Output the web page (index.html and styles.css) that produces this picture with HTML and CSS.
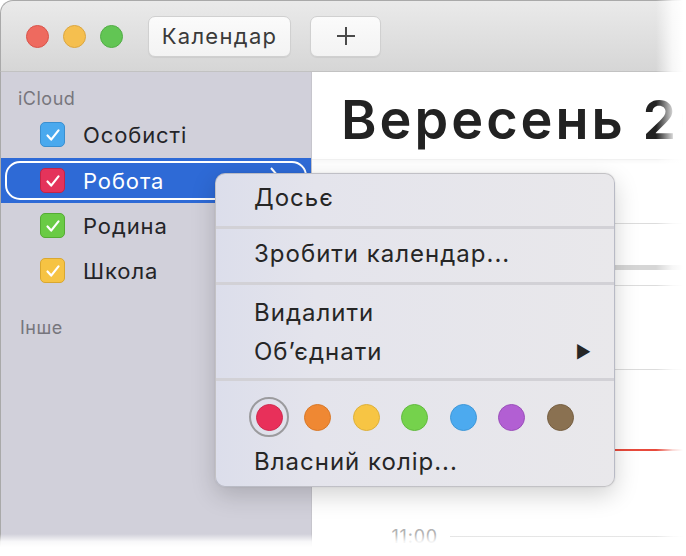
FILE: index.html
```html
<!DOCTYPE html>
<html lang="uk">
<head>
<meta charset="utf-8">
<title>Календар</title>
<link rel="stylesheet" href="styles.css">
</head>
<body>
<div class="window">
  <div class="toolbar">
    <div class="lights">
      <span class="light red"></span>
      <span class="light yellow"></span>
      <span class="light green"></span>
    </div>
    <button class="tbtn cal">Календар</button>
    <button class="tbtn plus"><svg width="22" height="22" viewBox="0 0 22 22"><path d="M11 2v18M2 11h18" stroke="#4a4a4a" stroke-width="2" fill="none"/></svg></button>
  </div>
  <div class="content">
    <aside class="sidebar">
      <div class="group">iCloud</div>
      <div class="item"><span class="cb cb-blue"><svg viewBox="0 0 24 24"><path d="M6 12.5l4 4.5 8-10" /></svg></span><span class="label">Особисті</span></div>
      <div class="item selected"><span class="cb cb-red"><svg viewBox="0 0 24 24"><path d="M6 12.5l4 4.5 8-10" /></svg></span><span class="label">Робота</span><svg class="chev" width="12" height="20" viewBox="0 0 12 20"><path d="M2 2l7 8-7 8" /></svg></div>
      <div class="item"><span class="cb cb-green"><svg viewBox="0 0 24 24"><path d="M6 12.5l4 4.5 8-10" /></svg></span><span class="label">Родина</span></div>
      <div class="item"><span class="cb cb-yellow"><svg viewBox="0 0 24 24"><path d="M6 12.5l4 4.5 8-10" /></svg></span><span class="label">Школа</span></div>
      <div class="group other">Інше</div>
    </aside>
    <main class="main">
      <div class="head"><h1>Вересень 2019 р.</h1></div>
      <div class="grid">
        <div class="gap g1"></div>
        <div class="line l1"></div>
        <div class="band"></div>
        <div class="line l2"></div>
        <div class="line l3"></div>
        <div class="now"></div>
        <div class="hour"><span class="time">11:00</span><span class="hline"></span></div>
      </div>
    </main>
  </div>

  <div class="menu">
    <div class="mi">Досьє</div>
    <div class="sep"></div>
    <div class="mi">Зробити календар...</div>
    <div class="sep"></div>
    <div class="mi mi-top">Видалити</div>
    <div class="mi mi-sub">Об’єднати<span class="arrow">▶</span></div>
    <div class="sep sep3"></div>
    <div class="colors">
      <span class="sw sel"><span class="dot c-red"></span></span>
      <span class="sw"><span class="dot c-orange"></span></span>
      <span class="sw"><span class="dot c-yellow"></span></span>
      <span class="sw"><span class="dot c-green"></span></span>
      <span class="sw"><span class="dot c-blue"></span></span>
      <span class="sw"><span class="dot c-purple"></span></span>
      <span class="sw"><span class="dot c-brown"></span></span>
    </div>
    <div class="mi mi-last">Власний колір...</div>
  </div>

  <div class="fade-right"></div>
  <div class="fade-bottom"></div>
</div>
</body>
</html>
```

FILE: styles.css
```css
* { box-sizing: border-box; }
html, body { margin: 0; padding: 0; background: #fff; }
body { font-family: Inter, "Noto Sans", "DejaVu Sans", sans-serif; color: #222; }

.window {
  position: relative;
  width: 686px;
  height: 556px;
  overflow: hidden;
  background: #fff;
}

.toolbar {
  height: 72px;
  display: flex;
  align-items: center;
  background: linear-gradient(#eaeaea, #d6d6d6);
  border-top: 1px solid #a9a9a9;
  border-left: 1px solid #a9a9a9;
  border-bottom: 1px solid #c2c2c2;
  border-top-left-radius: 13px;
  padding-left: 25px;
}
.lights { display: flex; gap: 14px; margin-right: 25px; }
.light { width: 23px; height: 23px; border-radius: 50%; display: block; }
.light.red { background: #ee6a5f; border: 1px solid #d9544a; }
.light.yellow { background: #f5bf4f; border: 1px solid #dba640; }
.light.green { background: #62c554; border: 1px solid #51ad45; }

.tbtn {
  height: 41px;
  border: 1px solid #d0d0d0;
  border-radius: 7px;
  background: linear-gradient(#fbfbfb, #f3f3f3);
  box-shadow: 0 1px 1px rgba(0,0,0,0.06);
  font-family: inherit;
  font-size: 22px;
  letter-spacing: 1.3px;
  color: #3a3a3a;
  padding: 0;
  display: flex;
  align-items: center;
  justify-content: center;
}
.cal { width: 143px; margin-right: 19px; }
.plus { width: 71px; }

.content { display: flex; height: 484px; }

.sidebar {
  flex: none;
  width: 312px;
  background: #d1d0da;
  border-left: 1px solid #a9a9a9;
  border-right: 1px solid #c6c5cc;
  padding-top: 14px;
}
.group { font-size: 18px; color: #77767d; padding-left: 17px; height: 26px; line-height: 26px; letter-spacing: 0.5px; }
.group.other { margin-top: 22px; padding-left: 19px; }
.item {
  height: 45px;
  display: flex;
  align-items: center;
  padding-left: 39px;
  font-size: 22px;
  letter-spacing: 0.9px;
  color: #242428;
  position: relative;
}
.item .label { margin-left: 18px; }
.item.selected {
  background: #2e6ad6;
  color: #fff;
  margin-top: 1px;
}
.item.selected::after {
  content: "";
  position: absolute;
  left: 4px; right: 4px; top: 3px; bottom: 3px;
  border: 2.5px solid #fff;
  border-radius: 15px;
}
.chev { position: absolute; left: 268px; top: 8px; }
.chev path { stroke: #fff; stroke-width: 2; fill: none; }

.cb {
  width: 25px; height: 25px;
  border-radius: 5px;
  display: flex; align-items: center; justify-content: center;
}
.cb svg { width: 22px; height: 22px; }
.cb svg path { stroke: #fff; stroke-width: 2.4; fill: none; stroke-linecap: round; stroke-linejoin: round; }
.cb-blue { background: #4aa9ee; border: 1px solid #3a8fd0; }
.cb-red { background: #e4335b; border: 1px solid #c22447; }
.cb-green { background: #6acb45; border: 1px solid #55ab34; }
.cb-yellow { background: #f6c343; border: 1px solid #d9a730; }

.main { flex: 1; min-width: 0; overflow: hidden; position: relative; }
.head { height: 88px; padding-left: 29px; border-bottom: 1px solid #f1f1f1; box-shadow: 0 2px 4px rgba(0,0,0,0.03); }
.head h1 {
  margin: 0;
  font-size: 54px;
  font-weight: 600;
  line-height: 1;
  padding-top: 21px;
  color: #222;
  white-space: nowrap;
  letter-spacing: 3px;
}
.grid { display: flex; flex-direction: column; }
.g1 { height: 63px; }
.line { height: 1px; background: #dcdcdc; margin-left: 138px; }
.band { height: 5px; background: #d6d6d6; margin-top: 41px; }
.l2 { margin-top: 15px; }
.l3 { margin-top: 83px; }
.now { height: 2px; background: #e84a3c; margin-top: 79px; margin-left: 138px; }
.hour { display: flex; align-items: center; margin-top: 77px; height: 16px; }
.time { width: 126px; text-align: right; font-size: 18px; letter-spacing: 0.8px; color: #b3b3b3; }
.hline { flex: 1; height: 1px; background: #dcdcdc; margin-left: 12px; }

.menu {
  position: absolute;
  left: 215px;
  top: 173px;
  width: 400px;
  height: 314px;
  display: flex;
  flex-direction: column;
  border-radius: 10px;
  background: linear-gradient(90deg, #dcdeeb 0%, #e4e4ec 25%, #e9e8eb 100%);
  border: 1px solid rgba(0,0,0,0.16);
  box-shadow: 0 8px 24px rgba(0,0,0,0.18), 0 0 2px rgba(0,0,0,0.1);
  padding-top: 9px;
  font-size: 24px;
  letter-spacing: 1px;
  color: #262626;
}
.mi { flex: none; height: 30px; line-height: 30px; padding-left: 38px; position: relative; }
.sep { flex: none; height: 3px; background: #d2d1d6; margin: 13px 0 10px; }
.sep3 { margin-top: 11px; }
.mi-top { margin-top: 3px; }
.mi-sub { margin-top: 9px; }
.arrow { position: absolute; right: 22px; top: 0; font-size: 17px; color: #262626; }
.colors { flex: none; display: flex; align-items: center; gap: 8.5px; padding-left: 33px; height: 42px; margin-top: 5px; }
.sw { width: 40px; height: 40px; border-radius: 50%; display: flex; align-items: center; justify-content: center; border: 2px solid transparent; }
.sw.sel { border-color: #9b9b9e; }
.dot { width: 27px; height: 27px; border-radius: 50%; display: block; }
.c-red { background: #e8305a; border: 1px solid #d02a4f; }
.c-orange { background: #ef8833; border: 1px solid #d87828; }
.c-yellow { background: #f7c544; border: 1px solid #ddb03a; }
.c-green { background: #75d24c; border: 1px solid #62ba3f; }
.c-blue { background: #4caaef; border: 1px solid #3e97d8; }
.c-purple { background: #b25fd3; border: 1px solid #9a4fba; }
.c-brown { background: #8a7151; border: 1px solid #765f42; }
.mi-last { margin-top: 9px; }

.fade-right {
  position: absolute; top: 0; right: 0; width: 30px; height: 100%;
  background: linear-gradient(90deg, rgba(255,255,255,0) 0%, rgba(255,255,255,0.8) 55%, #fff 90%);
}
.fade-bottom {
  position: absolute; left: 0; bottom: 0; width: 100%; height: 22px;
  background: linear-gradient(180deg, rgba(255,255,255,0) 0%, rgba(255,255,255,0.85) 35%, #fff 60%);
}
```
